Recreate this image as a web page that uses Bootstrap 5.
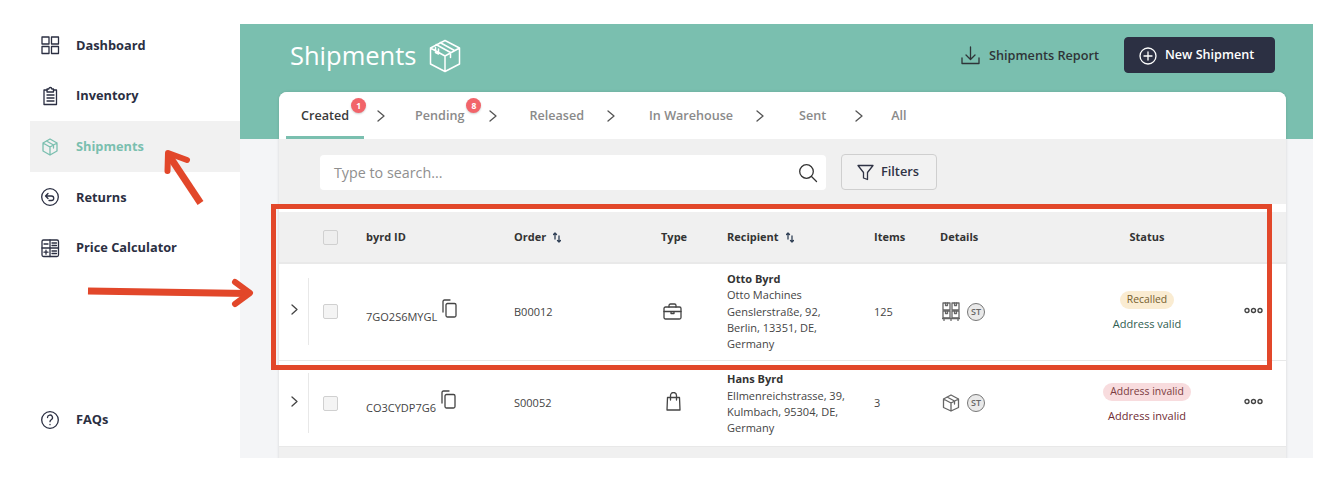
<!doctype html>
<html lang="en"><head><meta charset="utf-8"><title>Shipments</title>
<link href="https://cdn.jsdelivr.net/npm/bootstrap@5.3.0/dist/css/bootstrap.min.css" rel="stylesheet">
<style>
html,body{height:482px;overflow:hidden;background:#fff}
body{font-family:"Open Sans",sans-serif;color:#3a3a3a;position:relative}
svg{display:block;flex:none}
.ic{fill:none;stroke:currentColor;stroke-width:1.3;stroke-linecap:round;stroke-linejoin:round}
.app{height:458px;padding:20px 15px 0 30px}
.side{width:210px;height:438px;padding-bottom:13px;flex:none}
.side-item{height:50.67px;padding-left:10px;gap:16px;color:#2b2f42;font-weight:700;font-size:12.8px;text-decoration:none}
.side-item.on{background:#f1f1f1;color:#7abfaf}
.side-item.end{margin-top:auto}
.main{flex:1;margin-top:4px;min-width:0;overflow:hidden;background:linear-gradient(#7abfaf 115px,#f4f5f7 115px)}
.head{height:68px;padding:0 38px 5px 50px}
.title{font-size:25.5px;font-weight:400;color:#fff;margin:0;gap:13px;line-height:1}
.title svg{stroke-width:1.5}
.acts{margin-bottom:2px}
.rep{color:#2f3438;font-size:12.7px;font-weight:600;gap:9px;margin-right:25px;padding:2px 0 0;border:0;background:none}
.newb{background:#2c3043;border-color:#2c3043;color:#fff;font-size:12.6px;font-weight:600;height:36px;width:151px;padding:2px 0 0 14px;gap:8px;border-radius:4px}
.sheet{margin:0 27px 0 39px;background:#f0f0f0;border-radius:8px 8px 0 0;box-shadow:0 0 3px rgba(0,0,0,.14);height:400px}
.tabs{height:47px;padding-left:7px;background:#fff;font-size:12.6px;font-weight:600;color:#8a8a8a;position:relative;border-radius:8px 8px 0 0}
.tabs>span:not(.tab-on){margin-top:2px}
.tab-on{padding:0 15px;height:47px;color:#3a3a3a;border-bottom:3px solid #7abfaf;line-height:47px;position:relative}
.tab-txt{position:relative}
.cnt{position:absolute;top:-9px;right:-17px;width:15px;height:15px;border-radius:50%;background:#f2646a;color:#fff;font-size:8.5px;font-weight:700;line-height:15px;text-align:center;box-shadow:0 1px 2px rgba(0,0,0,.2)}
.chev{color:#555}
.c1{margin:0 30px 0 13px}.c2{margin:0 32px 0 25px}.c3{margin:0 34px 0 23px}.c4{margin:0 35px 0 23px}.c5{margin:0 28px 0 29px}
.bar{height:65px;background:#f0f0f0;padding:15px 0 0 41px;gap:15px;align-items:flex-start}
.srch{width:506px;height:35px;margin-top:1px;background:#fff;border-radius:4px;padding:0 8px 0 14px;font-size:14.3px;color:#8f8f8f}
.srch svg{color:#333}
.filt{width:96px;height:36px;padding:0 2px 0 0;gap:7px;font-size:12.8px;font-weight:600;color:#2f3345;background:#f2f2f2;border:1px solid #cfcfcf;border-radius:4px}
.tblwrap{background:#fff;padding-top:8px}
.tbl{table-layout:fixed;width:100%;border-collapse:collapse;font-size:11px;color:#444}
.tbl th,.tbl td{padding:0;vertical-align:middle}
.tbl thead tr{height:51px;background:#f0f0f0;border-bottom:2px solid #e9e9e9}
.tbl th{font-weight:700;color:#333;font-size:11px}
.tbl tbody tr{border-bottom:1px solid #e8e8e8}
.r1{height:97px}.r2{height:86px}
.w1{width:30px}.w2{width:57px}.w3{width:148px}.w4{width:147px}.w5{width:66px}.w6{width:147px}.w7{width:66px}.w8{width:118px}.w9{width:178px}
.rail{height:67px;border-right:1px solid #e8e8e8;padding-left:12px}
.rail svg{margin-top:-4px}
.r2 .rail{height:60px}
.cbx{width:15px;height:15px;border:1.5px solid #d0d0d0;background:#f4f4f4;border-radius:2px;margin-left:14px}
thead .cbx{background:#eee}
.idt{gap:5px}
.idt span{padding-top:10px}
.idt svg{margin-top:-7px}
.kind{margin-left:2px}
.kind.bag{margin-left:5px;margin-top:-4px}
.addr{line-height:16.3px}
.tbl .r2 td.addr{padding-top:2px}
.addr b{font-weight:700;color:#333;display:block}
.sort{display:inline-block;vertical-align:-2px;margin-left:7px;color:#2f3f55}
.tbl td.stat{text-align:center;line-height:1;padding-bottom:3px}
.pill{display:inline-block;border-radius:9px;height:18px;line-height:17px;padding:0 7px;font-size:10.4px}
.p-am{background:#faecd2;color:#75602f}
.p-re{background:#f8dcde;color:#7a3b40}
.note{margin-top:9px;font-size:11px}
.n-ok{color:#2f5d50}.n-bad{color:#6f2c33}
.det{gap:7px;color:#666;padding-left:2px}
.st{width:18px;height:18px;border:1.3px solid #777;border-radius:50%;background:#e9e9e9;font-size:9px;font-weight:600;color:#666;line-height:15.4px;text-align:center}
.tbl td.more{padding-left:8px;color:#444}
.more svg{stroke-width:1.4;margin-top:-3px}
.marks{position:absolute;left:0;top:0;pointer-events:none}
</style></head><body>
<div class="app d-flex">
<nav class="side d-flex flex-column">
<a class="side-item d-flex align-items-center" href="#"><svg class="ic" width="20" height="20" viewBox="0 0 20 20"><rect x="2" y="2" width="7" height="7"/><rect x="11.500" y="2" width="7" height="7"/><rect x="2" y="11.500" width="7" height="7"/><rect x="11.500" y="11.500" width="7" height="7"/></svg>Dashboard</a>
<a class="side-item d-flex align-items-center" href="#"><svg class="ic" width="20" height="20" viewBox="0 0 20 20"><path d="M7 4H4v14.500h12.500V4h-3"/><path d="M7 3h1.800a1.500 1.500 0 0 1 3 0h1.700v3H7zM7 9h7M7 12h7M7 15h7"/></svg>Inventory</a>
<a class="side-item on d-flex align-items-center" href="#"><svg class="ic" width="20" height="20" viewBox="0 0 20 20"><path d="M10 2l7 4v8l-7 4-7-4V6zM3 6l7 4 7-4M10 10v8M6.500 4l7 4v3"/></svg>Shipments</a>
<a class="side-item d-flex align-items-center" href="#"><svg class="ic" width="20" height="20" viewBox="0 0 20 20"><circle cx="10" cy="10" r="8.300"/><path d="M8 6.500L5.500 9 8 11.500M5.500 9h6a2.200 2.200 0 0 1 0 4.500H9"/></svg>Returns</a>
<a class="side-item d-flex align-items-center" href="#"><svg class="ic" width="20" height="20" viewBox="0 0 20 20"><rect x="2" y="2" width="16.500" height="16.500" rx="1.500"/><path d="M10 2v16.500M2 10h16.500M4 6h4M12 5h4.500M12 7.500h4.500M4 14.200h4M6 12.200v4M12 13h4.500M12 15.500h4.500"/></svg>Price Calculator</a>
<a class="side-item end d-flex align-items-center" href="#"><svg class="ic" width="20" height="20" viewBox="0 0 20 20"><circle cx="10" cy="10" r="8.300"/><path d="M7.500 7.500a2.500 2.500 0 1 1 3.700 2.200c-.8.500-1.200 1-1.200 2"/><path d="M10 14.500v.2"/></svg>FAQs</a>
</nav>
<main class="main">
<header class="head d-flex align-items-center justify-content-between">
<h1 class="title d-flex align-items-center">Shipments
<svg class="ic" width="32" height="34" viewBox="0 0 32 34"><path d="M16 1.500L30.500 9v16L16 32.500 1.500 25V9zM1.500 9L16 17l14.500-8M16 17v15.500M7 5.500l14.500 8v5M11 3.500l14.500 8M6.500 8.500v5l3 1.500v-5"/></svg></h1>
<div class="acts d-flex align-items-center">
<button class="rep btn d-flex align-items-center"><svg class="ic" width="19" height="19" viewBox="0 0 19 19"><path d="M9.500 1v12M5 9l4.500 4.500L14 9M1 12v5.500h17V12"/></svg>Shipments Report</button>
<button class="newb btn d-flex align-items-center"><svg class="ic" width="18" height="18" viewBox="0 0 18 18"><circle cx="9" cy="9" r="8"/><path d="M9 5v8M5 9h8"/></svg>New Shipment</button>
</div>
</header>
<section class="sheet">
<div class="tabs d-flex align-items-center">
<span class="tab-on"><span class="tab-txt">Created<i class="cnt fst-normal">1</i></span></span>
<svg class="chev c1 ic" width="8" height="12" viewBox="0 0 8 12"><path d="M1 1l6 5-6 5"/></svg>
<span class="tab-txt">Pending<i class="cnt fst-normal">8</i></span>
<svg class="chev c2 ic" width="8" height="12" viewBox="0 0 8 12"><path d="M1 1l6 5-6 5"/></svg>
<span>Released</span>
<svg class="chev c3 ic" width="8" height="12" viewBox="0 0 8 12"><path d="M1 1l6 5-6 5"/></svg>
<span>In Warehouse</span>
<svg class="chev c4 ic" width="8" height="12" viewBox="0 0 8 12"><path d="M1 1l6 5-6 5"/></svg>
<span>Sent</span>
<svg class="chev c5 ic" width="8" height="12" viewBox="0 0 8 12"><path d="M1 1l6 5-6 5"/></svg>
<span>All</span>
</div>
<div class="bar d-flex">
<div class="srch d-flex align-items-center justify-content-between"><span>Type to search...</span><svg class="ic" width="20" height="20" viewBox="0 0 20 20"><circle cx="8.500" cy="8.500" r="6.800"/><path d="M13.500 13.500l5 5"/></svg></div>
<button class="filt btn d-flex align-items-center justify-content-center"><svg class="ic" width="17" height="17" viewBox="0 0 17 17"><path d="M1 1.500h15l-5.500 7v7l-4-1.500V8.500z"/></svg>Filters</button>
</div>
<div class="tblwrap">
<table class="tbl">
<colgroup><col class="w1"><col class="w2"><col class="w3"><col class="w4"><col class="w5"><col class="w6"><col class="w7"><col class="w8"><col class="w9"><col></colgroup>
<thead><tr><th></th><th><div class="cbx"></div></th><th>byrd ID</th>
<th>Order<svg class="sort d-inline-block ic" width="8" height="11" viewBox="0 0 8 11"><path d="M2 7V1L.5 2.500M2 1l1.500 1.500M6 4v6L4.500 8.500M6 10l1.500-1.500"/></svg></th>
<th>Type</th>
<th>Recipient<svg class="sort d-inline-block ic" width="8" height="11" viewBox="0 0 8 11"><path d="M2 7V1L.5 2.500M2 1l1.500 1.500M6 4v6L4.500 8.500M6 10l1.500-1.500"/></svg></th>
<th>Items</th><th>Details</th><th class="text-center">Status</th><th></th></tr></thead>
<tbody>
<tr class="r1">
<td><div class="rail d-flex align-items-center"><svg class="ic" width="7" height="11" viewBox="0 0 7 11"><path d="M1 1l5 4.500-5 4.500"/></svg></div></td>
<td><div class="cbx"></div></td>
<td><div class="idt d-flex align-items-center"><span>7GO2S6MYGL</span><svg class="ic" width="15" height="19" viewBox="0 0 15 19"><path d="M1 13V2.500A1.500 1.500 0 0 1 2.500 1H8"/><rect x="4" y="4.500" width="10" height="13.500" rx="1.500"/></svg></div></td>
<td>B00012</td>
<td><svg class="kind ic" width="19" height="17" viewBox="0 0 19 17"><rect x="1" y="4" width="17" height="12" rx="1.500"/><path d="M6 4V2.500A1.500 1.500 0 0 1 7.500 1h4A1.500 1.500 0 0 1 13 2.500V4M1 8.500h17M8 8.500v2h3v-2"/></svg></td>
<td class="addr"><b>Otto Byrd</b>Otto Machines<br>Genslerstraße, 92,<br>Berlin, 13351, DE,<br>Germany</td>
<td>125</td>
<td><div class="det d-flex align-items-center"><svg class="ic" width="18" height="19" viewBox="0 0 18 19"><rect x="1" y="1" width="7" height="7"/><rect x="10" y="1" width="7" height="7"/><rect x="1" y="9" width="7" height="7"/><rect x="10" y="9" width="7" height="7"/><path d="M0.500 16.500h17M2 16.500v2M16 16.500v2M9 16.500v2M3.500 1v2.500h2V1M12.500 1v2.500h2V1M3.500 9v2.500h2V9M12.500 9v2.500h2V9"/></svg><div class="st">ST</div></div></td>
<td class="stat"><span class="pill p-am">Recalled</span><div class="note n-ok">Address valid</div></td>
<td class="more"><svg class="ic" width="19" height="7" viewBox="0 0 19 7"><circle cx="3" cy="3.500" r="2"/><circle cx="9.500" cy="3.500" r="2"/><circle cx="16" cy="3.500" r="2"/></svg></td>
</tr>
<tr class="r2">
<td><div class="rail d-flex align-items-center"><svg class="ic" width="7" height="11" viewBox="0 0 7 11"><path d="M1 1l5 4.500-5 4.500"/></svg></div></td>
<td><div class="cbx"></div></td>
<td><div class="idt d-flex align-items-center"><span>CO3CYDP7G6</span><svg class="ic" width="15" height="19" viewBox="0 0 15 19"><path d="M1 13V2.500A1.500 1.500 0 0 1 2.500 1H8"/><rect x="4" y="4.500" width="10" height="13.500" rx="1.500"/></svg></div></td>
<td>S00052</td>
<td><svg class="kind bag ic" width="15" height="19" viewBox="0 0 15 19"><path d="M1.500 5.500h12L14 18H1zM4.500 8V3.500a3 3 0 0 1 6 0V8"/></svg></td>
<td class="addr"><b>Hans Byrd</b>Ellmenreichstrasse, 39,<br>Kulmbach, 95304, DE,<br>Germany</td>
<td>3</td>
<td><div class="det d-flex align-items-center"><svg class="ic" width="18" height="18" viewBox="0 0 18 18"><path d="M9 1l7.500 4v8.500L9 17l-7.500-3.500V5zM1.500 5L9 9l7.500-4M9 9v8M5 3l7.500 4v3"/></svg><div class="st">ST</div></div></td>
<td class="stat"><span class="pill p-re">Address invalid</span><div class="note n-bad">Address invalid</div></td>
<td class="more"><svg class="ic" width="19" height="7" viewBox="0 0 19 7"><circle cx="3" cy="3.500" r="2"/><circle cx="9.500" cy="3.500" r="2"/><circle cx="16" cy="3.500" r="2"/></svg></td>
</tr>
</tbody></table>
</div>
</section>
</main>
</div>
<svg class="marks" width="1328" height="482" viewBox="0 0 1328 482" fill="none" stroke="#e2472a" stroke-linecap="round" stroke-linejoin="round">
<rect x="273.500" y="206.500" width="996" height="161" stroke-width="5" stroke-linecap="butt" stroke-linejoin="miter"/>
<path d="M200.500 203L168 154" stroke-width="7" stroke-linecap="butt"/>
<path d="M167.500 171L168 153L187 160" stroke-width="6"/>
<path d="M88 291L248 293.500" stroke-width="7" stroke-linecap="butt"/>
<path d="M235 282L250 293L235 304" stroke-width="6"/>
</svg>
</body></html>
